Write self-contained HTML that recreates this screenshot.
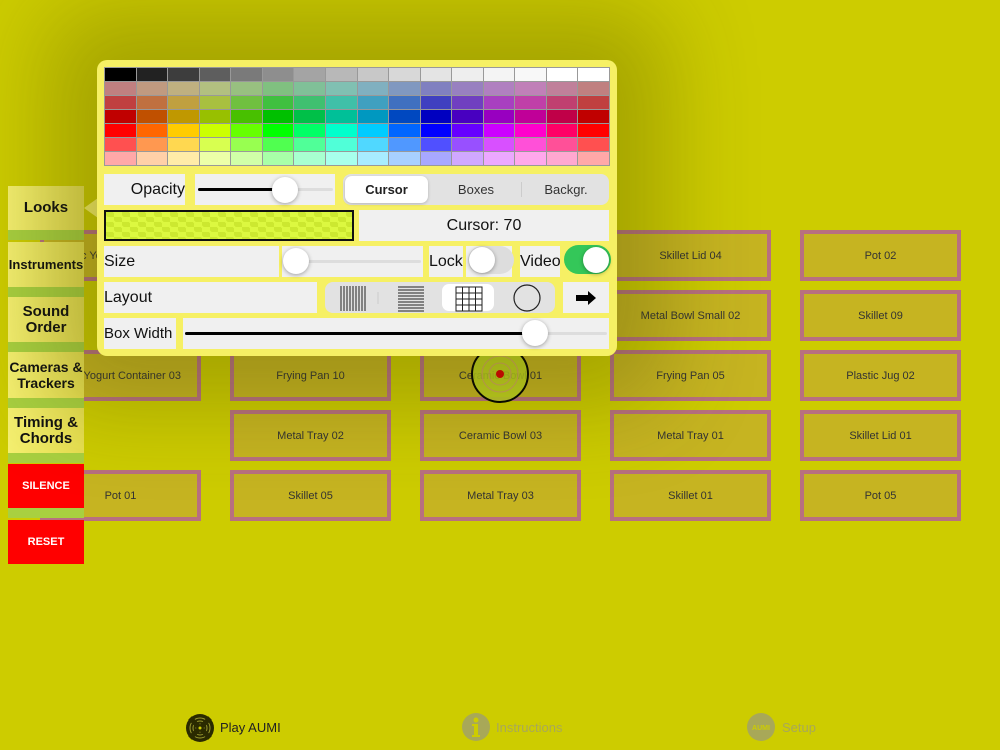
<!DOCTYPE html>
<html><head><meta charset="utf-8"><style>
*{box-sizing:border-box;margin:0;padding:0}
body{width:1000px;height:750px;overflow:hidden;background:#cdcc00;font-family:"Liberation Sans",sans-serif;position:relative}
.a{position:absolute}
.box{position:absolute;width:161px;height:51px;border:4px solid #b87080;background:#c6b421;font-size:11px;color:#333;display:flex;align-items:center;justify-content:center;white-space:nowrap}
.side{position:absolute;left:8px;width:76px;background:linear-gradient(90deg,#f5f070,#e8e050);font-weight:bold;font-size:15px;text-align:center;display:flex;align-items:center;justify-content:center;line-height:16px;color:#111}
.gb{position:absolute;left:8px;width:76px;height:10px;background:#a8d040}
.red{background:#f00;color:#fff;font-size:11px}
.pop{position:absolute;left:97px;top:60px;width:520px;height:296px;background:#f6f064;border-radius:10px;box-shadow:0 0 90px 50px rgba(60,60,0,.28)}
.cell{position:absolute;background:#f0f0f0;font-size:16px;color:#111;display:flex;align-items:center;white-space:nowrap;overflow:hidden}
table{border-collapse:collapse;position:absolute;left:7px;top:7px;width:506px;height:99px;border:1px solid #888}
td{border:1px solid #999;padding:0}
.thumb{position:absolute;width:26px;height:26px;border-radius:50%;background:#fff;box-shadow:0 1px 4px rgba(0,0,0,.35)}
.track{position:absolute;height:3px;background:#ddd;border-radius:2px}
.fill{position:absolute;height:3px;background:#000;border-radius:2px}
</style></head><body>

<div class="box" style="left:40px;top:230px">Plastic Yogurt Container 02</div>
<div class="box" style="left:40px;top:350px;justify-content:flex-end;padding-right:16px">Plastic Yogurt Container 03</div>
<div class="box" style="left:40px;top:470px">Pot 01</div>
<div class="box" style="left:230px;top:230px"></div>
<div class="box" style="left:230px;top:290px"></div>
<div class="box" style="left:230px;top:350px">Frying Pan 10</div>
<div class="box" style="left:230px;top:410px">Metal Tray 02</div>
<div class="box" style="left:230px;top:470px">Skillet 05</div>
<div class="box" style="left:420px;top:350px">Ceramic Bowl 01</div>
<div class="box" style="left:420px;top:410px">Ceramic Bowl 03</div>
<div class="box" style="left:420px;top:470px">Metal Tray 03</div>
<div class="box" style="left:610px;top:230px">Skillet Lid 04</div>
<div class="box" style="left:610px;top:290px">Metal Bowl Small 02</div>
<div class="box" style="left:610px;top:350px">Frying Pan 05</div>
<div class="box" style="left:610px;top:410px">Metal Tray 01</div>
<div class="box" style="left:610px;top:470px">Skillet 01</div>
<div class="box" style="left:800px;top:230px">Pot 02</div>
<div class="box" style="left:800px;top:290px">Skillet 09</div>
<div class="box" style="left:800px;top:350px">Plastic Jug 02</div>
<div class="box" style="left:800px;top:410px">Skillet Lid 01</div>
<div class="box" style="left:800px;top:470px">Pot 05</div>

<svg class="a" style="left:470px;top:344px" width="60" height="62"><circle cx="30" cy="30" r="28" fill="#c0d820" fill-opacity=".85" stroke="#000" stroke-width="2"/><circle cx="30" cy="30" r="18" fill="none" stroke="#d88" stroke-width="1" opacity=".6"/><circle cx="30" cy="30" r="11" fill="none" stroke="#d88" stroke-width="1" opacity=".6"/><circle cx="30" cy="30" r="4" fill="#d00"/></svg>

<div class="gb" style="top:230px"></div><div class="gb" style="top:287px"></div><div class="gb" style="top:342px"></div><div class="gb" style="top:398px"></div><div class="gb" style="top:453px"></div><div class="gb" style="top:508px"></div>
<div class="side" style="top:186px;height:44px">Looks</div>
<div class="side" style="top:242px;height:45px;font-size:13px">Instruments</div>
<div class="side" style="top:297px;height:45px">Sound<br>Order</div>
<div class="side" style="top:352px;height:46px;font-size:14px">Cameras &amp;<br>Trackers</div>
<div class="side" style="top:408px;height:45px">Timing &amp;<br>Chords</div>
<div class="side red" style="top:464px;height:44px">SILENCE</div>
<div class="side red" style="top:520px;height:44px">RESET</div>
<div class="a" style="left:84px;top:198px;width:0;height:0;border-top:10px solid transparent;border-bottom:10px solid transparent;border-right:14px solid #f6f064"></div>

<div class="pop">
<table>
<tr><td style="background:#000"></td><td style="background:#222"></td><td style="background:#3d3d3d"></td><td style="background:#5e5e5e"></td><td style="background:#7a7a7a"></td><td style="background:#8e8e8e"></td><td style="background:#a4a4a4"></td><td style="background:#b8b8b8"></td><td style="background:#c8c8c8"></td><td style="background:#d8d8d8"></td><td style="background:#e4e4e4"></td><td style="background:#eee"></td><td style="background:#f4f4f4"></td><td style="background:#f8f8f8"></td><td style="background:#fff"></td><td style="background:#fff"></td></tr>
<tr><td style="background:#c08080"></td><td style="background:#c09a80"></td><td style="background:#bfb080"></td><td style="background:#b2c080"></td><td style="background:#98c080"></td><td style="background:#80c080"></td><td style="background:#80c098"></td><td style="background:#80c0b2"></td><td style="background:#80b0c0"></td><td style="background:#8098c0"></td><td style="background:#8080c0"></td><td style="background:#9880c0"></td><td style="background:#b080c0"></td><td style="background:#c080b8"></td><td style="background:#c0809a"></td><td style="background:#c08080"></td></tr>
<tr><td style="background:#c04040"></td><td style="background:#c07040"></td><td style="background:#c0a040"></td><td style="background:#a8c040"></td><td style="background:#70c040"></td><td style="background:#40c040"></td><td style="background:#40c070"></td><td style="background:#40c0a8"></td><td style="background:#40a0c0"></td><td style="background:#4070c0"></td><td style="background:#4040c0"></td><td style="background:#7040c0"></td><td style="background:#a840c0"></td><td style="background:#c040a8"></td><td style="background:#c04070"></td><td style="background:#c04040"></td></tr>
<tr><td style="background:#c00000"></td><td style="background:#c05000"></td><td style="background:#c09800"></td><td style="background:#98c000"></td><td style="background:#48c000"></td><td style="background:#00c000"></td><td style="background:#00c048"></td><td style="background:#00c098"></td><td style="background:#0098c0"></td><td style="background:#0048c0"></td><td style="background:#0000c0"></td><td style="background:#4800c0"></td><td style="background:#9800c0"></td><td style="background:#c00098"></td><td style="background:#c00048"></td><td style="background:#c00000"></td></tr>
<tr><td style="background:#f00"></td><td style="background:#f60"></td><td style="background:#fc0"></td><td style="background:#cf0"></td><td style="background:#6f0"></td><td style="background:#0f0"></td><td style="background:#0f6"></td><td style="background:#0fc"></td><td style="background:#0cf"></td><td style="background:#06f"></td><td style="background:#00f"></td><td style="background:#60f"></td><td style="background:#c0f"></td><td style="background:#f0c"></td><td style="background:#f06"></td><td style="background:#f00"></td></tr>
<tr><td style="background:#ff5050"></td><td style="background:#ff9850"></td><td style="background:#ffd850"></td><td style="background:#d8ff50"></td><td style="background:#98ff50"></td><td style="background:#50ff50"></td><td style="background:#50ff98"></td><td style="background:#50ffd8"></td><td style="background:#50d8ff"></td><td style="background:#5098ff"></td><td style="background:#5050ff"></td><td style="background:#9850ff"></td><td style="background:#d850ff"></td><td style="background:#ff50d8"></td><td style="background:#ff5098"></td><td style="background:#ff5050"></td></tr>
<tr><td style="background:#ffa8a8"></td><td style="background:#ffd0a8"></td><td style="background:#ffeca8"></td><td style="background:#ecffa8"></td><td style="background:#d0ffa8"></td><td style="background:#a8ffa8"></td><td style="background:#a8ffd0"></td><td style="background:#a8ffec"></td><td style="background:#a8ecff"></td><td style="background:#a8d0ff"></td><td style="background:#a8a8ff"></td><td style="background:#d0a8ff"></td><td style="background:#eca8ff"></td><td style="background:#ffa8ec"></td><td style="background:#ffa8d0"></td><td style="background:#ffa8a8"></td></tr>
</table>

<div class="cell" style="left:7px;top:114px;width:81px;height:31px;justify-content:flex-end">Opacity</div>
<div class="cell" style="left:98px;top:114px;width:140px;height:31px"></div>
<div class="track" style="left:101px;top:128px;width:135px"></div>
<div class="fill" style="left:101px;top:128px;width:88px"></div>
<div class="thumb" style="left:175px;top:117px"></div>
<div class="a" style="left:246px;top:114px;width:266px;height:31px;background:#e2e2e2;border-radius:8px"></div>
<div class="a" style="left:248px;top:116px;width:83px;height:27px;background:#fff;border-radius:7px;box-shadow:0 1px 3px rgba(0,0,0,.2);font-size:13px;display:flex;align-items:center;justify-content:center;font-weight:bold;color:#222">Cursor</div>
<div class="a" style="left:335px;top:116px;width:88px;height:27px;font-size:13px;display:flex;align-items:center;justify-content:center;color:#333">Boxes</div>
<div class="a" style="left:424px;top:122px;width:1px;height:15px;background:#ccc"></div>
<div class="a" style="left:425px;top:116px;width:88px;height:27px;font-size:13px;display:flex;align-items:center;justify-content:center;color:#333">Backgr.</div>

<div class="a" style="left:7px;top:150px;width:250px;height:31px;border:2px solid #111;background-color:#cce830;background-image:linear-gradient(45deg,#dcf840 25%,transparent 25%,transparent 75%,#dcf840 75%),linear-gradient(45deg,#dcf840 25%,transparent 25%,transparent 75%,#dcf840 75%);background-size:16px 10px;background-position:0 0,8px 5px"></div>
<div class="cell" style="left:262px;top:150px;width:250px;height:31px;justify-content:center">Cursor: 70</div>

<div class="cell" style="left:7px;top:186px;width:175px;height:31px">Size</div>
<div class="cell" style="left:185px;top:186px;width:141px;height:31px"></div>
<div class="track" style="left:196px;top:200px;width:128px"></div>
<div class="thumb" style="left:186px;top:188px"></div>
<div class="cell" style="left:332px;top:186px;width:34px;height:31px">Lock</div>
<div class="cell" style="left:369px;top:186px;width:46px;height:31px"></div>
<div class="a" style="left:371px;top:186px;width:46px;height:28px;border-radius:14px;background:#ddd"></div>
<div class="thumb" style="left:372px;top:187px"></div>
<div class="cell" style="left:423px;top:186px;width:40px;height:31px">Video</div>
<div class="a" style="left:467px;top:185px;width:47px;height:29px;border-radius:15px;background:#34c759"></div>
<div class="thumb" style="left:486px;top:187px;background:#fff"></div>

<div class="cell" style="left:7px;top:222px;width:213px;height:31px">Layout</div>
<div class="a" style="left:228px;top:222px;width:230px;height:31px;background:#e2e2e2;border-radius:8px"></div>
<div class="a" style="left:345px;top:224px;width:52px;height:27px;background:#fff;border-radius:7px"></div>
<svg class="a" style="left:228px;top:222px" width="230" height="31">
<g stroke="#222" stroke-width="1">
<path d="M16 4V29M19 4V29M22 4V29M25 4V29M28 4V29M31 4V29M34 4V29M37 4V29M40 4V29"/>
<path d="M73 5H99M73 8H99M73 11H99M73 14H99M73 17H99M73 20H99M73 23H99M73 26H99M73 29H99"/>
<path d="M131 5H157V29H131ZM131 11H157M131 17H157M131 23H157M137.5 5V29M144 5V29M150.5 5V29" fill="none"/>
<circle cx="202" cy="16" r="13" fill="none" stroke-width="1.2"/>
</g><path d="M53 10V22" stroke="#ccc"/></svg>
<div class="cell" style="left:466px;top:222px;width:46px;height:31px;justify-content:center"><svg width="22" height="14"><path d="M1 4H13V0L21 7L13 14V10H1Z" fill="#000"/></svg></div>

<div class="cell" style="left:7px;top:258px;width:72px;height:31px;font-size:15px">Box Width</div>
<div class="cell" style="left:86px;top:258px;width:426px;height:31px"></div>
<div class="track" style="left:88px;top:272px;width:422px"></div>
<div class="fill" style="left:88px;top:272px;width:350px"></div>
<div class="thumb" style="left:425px;top:260px"></div>
</div>

<svg class="a" style="left:185px;top:713px" width="30" height="30"><circle cx="15" cy="15" r="14" fill="#2a2a00"/><g fill="none" stroke="#9a9a30" stroke-width="1"><circle cx="15" cy="15" r="4"/><circle cx="15" cy="15" r="7"/><circle cx="15" cy="15" r="10"/></g><path d="M15 15L5 5M15 15L25 5M15 15L5 25M15 15L25 25" stroke="#2a2a00" stroke-width="5"/><circle cx="15" cy="15" r="1.5" fill="#cc0"/></svg>
<div class="a" style="left:220px;top:720px;font-size:13px;color:#222">Play AUMI</div>
<svg class="a" style="left:462px;top:713px" width="28" height="28"><circle cx="14" cy="14" r="14" fill="#a8a858"/><circle cx="14" cy="7" r="2.5" fill="#cdcc00"/><path d="M10 11H16V22H18V24H10V22H12V13H10Z" fill="#cdcc00"/></svg>
<div class="a" style="left:496px;top:720px;font-size:13px;color:#a8a858">Instructions</div>
<svg class="a" style="left:747px;top:713px" width="28" height="28"><circle cx="14" cy="14" r="14" fill="#a8a858"/><text x="14" y="17" font-size="7" font-family="Liberation Sans" fill="#cdcc00" text-anchor="middle" font-weight="bold">AUMI</text></svg>
<div class="a" style="left:782px;top:720px;font-size:13px;color:#a8a858">Setup</div>
</body></html>
